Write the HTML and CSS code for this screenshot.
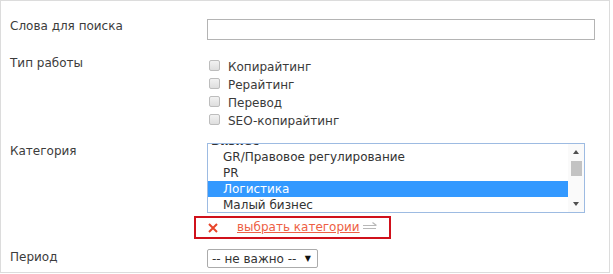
FILE: index.html
```html
<!DOCTYPE html>
<html lang="ru">
<head>
<meta charset="utf-8">
<title>Поиск</title>
<link rel="stylesheet" href="styles.css">
</head>
<body>
<div class="panel">
  <div class="row row-words">
    <div class="label">Слова для поиска</div>
    <div class="field"><div class="text-input"></div></div>
  </div>
  <div class="row row-type">
    <div class="label">Тип работы</div>
    <div class="field">
      <ul class="checks">
        <li class="check"><span class="box"></span><span class="check-text">Копирайтинг</span></li>
        <li class="check"><span class="box"></span><span class="check-text">Рерайтинг</span></li>
        <li class="check"><span class="box"></span><span class="check-text">Перевод</span></li>
        <li class="check"><span class="box"></span><span class="check-text">SEO-копирайтинг</span></li>
      </ul>
    </div>
  </div>
  <div class="row row-cat">
    <div class="label label-cat">Категория</div>
    <div class="field">
      <div class="listbox">
        <div class="options">
          <div class="options-inner">
            <div class="opt group">Бизнес</div>
            <div class="opt">GR/Правовое регулирование</div>
            <div class="opt">PR</div>
            <div class="opt selected">Логистика</div>
            <div class="opt">Малый бизнес</div>
          </div>
        </div>
        <div class="scrollbar">
          <div class="sb-btn"><span class="tri-up"></span></div>
          <div class="thumb"></div>
          <div class="sb-space"></div>
          <div class="sb-btn"><span class="tri-down"></span></div>
        </div>
      </div>
      <div class="pick">
        <svg class="x-icon" width="10" height="10" viewBox="0 0 10 10"><path d="M1 1L9 9M9 1L1 9" stroke="#e8452a" stroke-width="2" fill="none"/></svg>
        <a class="pick-link" href="#">выбрать категории</a>
        <svg class="arrow" width="15" height="9" viewBox="0 0 15 9"><path d="M0 3.5H13M9.5 0.5L13.5 3.5M0 6.5H13" stroke="#b8b8b8" stroke-width="1.2" fill="none"/></svg>
      </div>
    </div>
  </div>
  <div class="row row-period">
    <div class="label label-period">Период</div>
    <div class="field">
      <div class="select"><span>-- не важно --</span><span class="sel-arrow">▼</span></div>
    </div>
  </div>
</div>
</body>
</html>
```
FILE: styles.css
```css
html, body {
  margin: 0;
  padding: 0;
  background: #ffffff;
}
body {
  font-family: "DejaVu Sans", Verdana, sans-serif;
  font-size: 12px;
  color: #3a3a3a;
}
.panel {
  box-sizing: border-box;
  width: 610px;
  height: 273px;
  border: 1px solid #dcdcdc;
  padding: 18px 0 0 9px;
}
.row {
  display: flex;
  align-items: flex-start;
}
.label {
  width: 197px;
  flex: none;
  line-height: 15px;
  color: #3c3c3c;
}
.field {
  flex: none;
}
.text-input {
  box-sizing: border-box;
  width: 388px;
  height: 21px;
  border: 1px solid #b4b4b4;
  background: #fff;
}
.row-type {
  margin-top: 16px;
}
.checks {
  list-style: none;
  margin: 0;
  padding: 2px 0 0 0;
}
.check {
  display: flex;
  align-items: center;
  height: 18px;
}
.box {
  box-sizing: border-box;
  width: 11px;
  height: 11px;
  margin-left: 2px;
  margin-top: -3px;
  border: 1px solid #bdbdbd;
  border-radius: 2px;
  background: linear-gradient(#f2f2f2, #dedede);
}
.check-text {
  margin-left: 8px;
  color: #3a3a3a;
}
.row-cat {
  margin-top: 13px;
}
.label-cat {
  padding-top: 1px;
}
.listbox {
  box-sizing: border-box;
  width: 378px;
  height: 70px;
  border: 1px solid #9dbbe2;
  display: flex;
  background: #fff;
}
.options {
  flex: 1;
  overflow: hidden;
  height: 68px;
}
.options-inner {
  margin-top: -11px;
}
.opt {
  height: 16px;
  line-height: 16px;
  padding-left: 15px;
  white-space: nowrap;
  color: #333;
}
.opt.group {
  padding-left: 3px;
  font-weight: bold;
}
.opt.selected {
  background: #3399ff;
  color: #ffffff;
}
.scrollbar {
  width: 16px;
  flex: none;
  display: flex;
  flex-direction: column;
  align-items: center;
  background: #fafafa;
}
.sb-btn {
  height: 16px;
  width: 16px;
  display: flex;
  align-items: center;
  justify-content: center;
}
.tri-up {
  width: 0;
  height: 0;
  border-left: 3.5px solid transparent;
  border-right: 3.5px solid transparent;
  border-bottom: 4px solid #505050;
}
.tri-down {
  width: 0;
  height: 0;
  border-left: 3.5px solid transparent;
  border-right: 3.5px solid transparent;
  border-top: 4px solid #505050;
}
.thumb {
  margin-top: 1px;
  width: 11px;
  height: 15px;
  background: #c3c3c3;
}
.sb-space {
  flex: 1;
}
.pick {
  box-sizing: border-box;
  width: 197px;
  height: 23px;
  margin: 3px 0 0 -13px;
  border: 2px solid #d0111b;
  display: flex;
  align-items: center;
  padding-left: 12px;
}
.x-icon {
  flex: none;
}
.pick-link {
  margin-left: 19px;
  color: #ee5f45;
  text-decoration: underline;
  line-height: 15px;
}
.arrow {
  margin-left: 3px;
  margin-top: -2px;
}
.row-period {
  margin-top: 10px;
}
.label-period {
  padding-top: 1px;
}
.select {
  box-sizing: border-box;
  width: 111px;
  height: 19px;
  border: 1px solid #ababab;
  border-radius: 2px;
  display: flex;
  align-items: center;
  padding-left: 4px;
  color: #333;
}
.sel-arrow {
  margin-left: auto;
  margin-right: 6px;
  font-size: 8px;
  color: #111;
}
```
